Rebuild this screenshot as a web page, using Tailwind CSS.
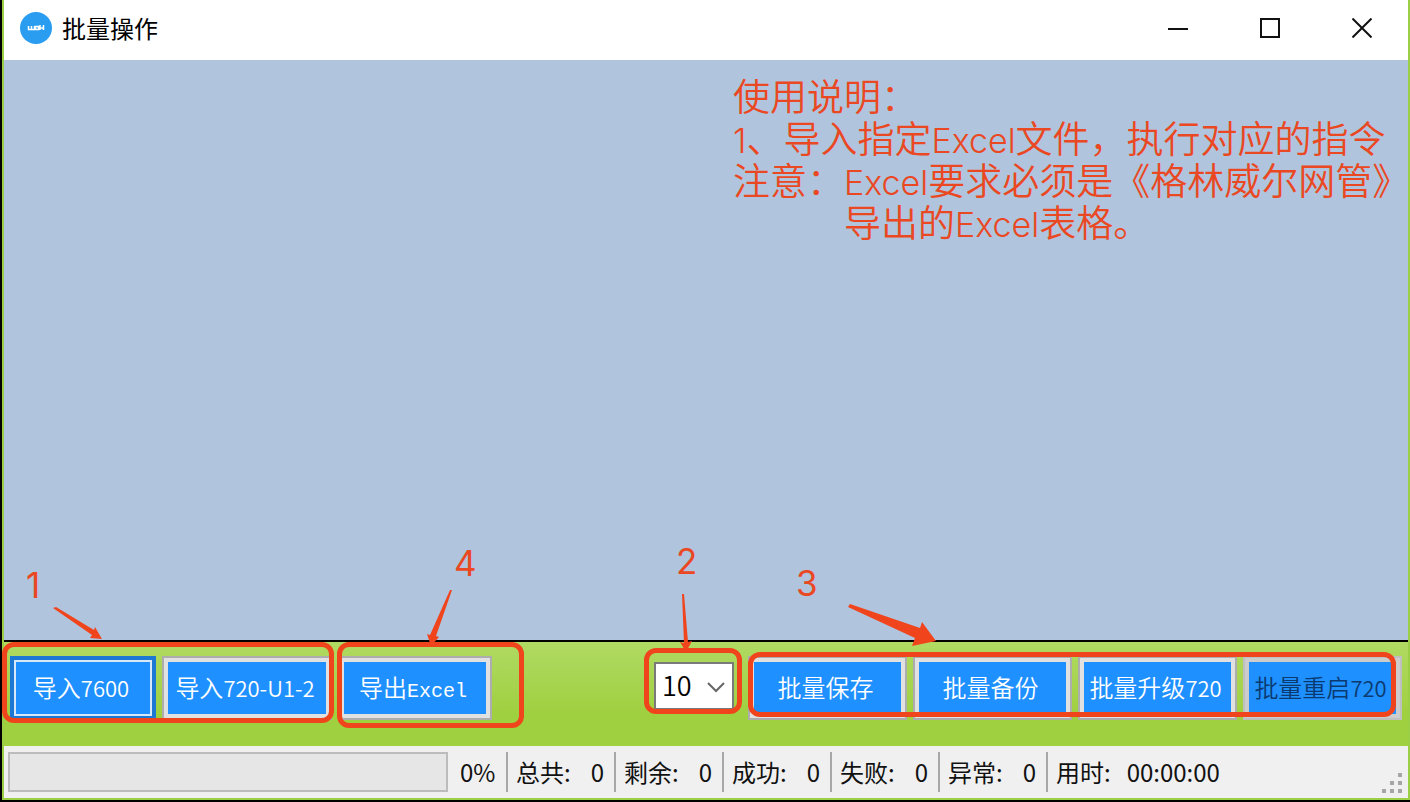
<!DOCTYPE html>
<html lang="zh-CN">
<head>
<meta charset="utf-8">
<title>批量操作</title>
<script src="https://cdn.jsdelivr.net/npm/@tailwindcss/browser@4"></script>
</head>
<body class="min-h-screen flex flex-col overflow-x-hidden border-l-2 border-b-2 border-black font-['Noto_Sans_CJK_SC',sans-serif]">
<div class="flex-1 flex flex-col border-x-2 border-b-2 border-[#9bcf45]">

  <header class="h-15 flex items-center bg-white pl-4 pb-1">
    <svg class="size-8" viewBox="0 0 32 32" aria-hidden="true">
      <circle cx="16" cy="16" r="16" fill="#2b9df0"/>
      <path d="M8.500 14v3.500h6V14M11.500 14v3.500M15.500 14.500h3v3h-3zM20 13v5M23.500 13v5M20 16h3.500" fill="none" stroke="#fff" stroke-width="1.500"/>
    </svg>
    <h1 class="ml-[10px] text-2xl text-black">批量操作</h1>
    <div class="ml-auto flex h-full">
      <button aria-label="最小化" class="w-[92px] grid place-items-center"><svg width="20" height="20" viewBox="0 0 20 20"><path d="M0 11h20" stroke="#111" stroke-width="2"/></svg></button>
      <button aria-label="最大化" class="w-[92px] grid place-items-center"><svg width="20" height="20" viewBox="0 0 20 20"><path d="M1 1h18v18H1z" fill="none" stroke="#111" stroke-width="2"/></svg></button>
      <button aria-label="关闭" class="w-[92px] grid place-items-center"><svg width="20" height="20" viewBox="0 0 20 20"><path d="M.5.5l19 19M19.500.5l-19 19" stroke="#111" stroke-width="2"/></svg></button>
    </div>
  </header>

  <main class="flex-1 flex justify-end bg-[#b0c4de]">
    <div class="w-[675px] pt-[14px] whitespace-nowrap text-[37px] leading-[42px] font-[350] text-[#ea4822]">
      <p>使用说明：</p>
      <p><span class="font-[Inter] text-[34px] leading-none">1</span>、导入指定<span class="font-[Inter] text-[34px] leading-none">Excel</span>文件，执行对应的指令</p>
      <p>注意：<span class="font-[Inter] text-[34px] leading-none">Excel</span>要求必须是《格林威尔网管》</p>
      <p class="pl-[111px]">导出的<span class="font-[Inter] text-[34px] leading-none">Excel</span>表格。</p>
    </div>
  </main>

  <section class="h-[106px] flex items-start border-t-2 border-black bg-linear-to-b from-[#b0da62] to-[#9fd03f] to-70% px-[6px] pt-[14px] text-2xl font-[350] text-white">
    <div class="relative flex gap-[6px]">
      <button class="w-[146px] h-16 border-4 border-[#1c78d2] bg-[#1e90ff]"><span class="flex h-full items-center justify-center border-2 border-[#d6e8fa] pr-1 pb-[2px]"><span>导入<span class="text-[22px] leading-none">7600</span></span></span></button>
      <button class="w-[170px] h-16 border-2 border-[#adadad] bg-[#1e90ff]"><span class="flex h-full items-center justify-center border-4 border-[#e1e1e1] pr-1 pb-[2px] whitespace-nowrap"><span>导入<span class="text-[22px] leading-none">720-U1-2</span></span></span></button>
      <div class="pointer-events-none absolute -left-2 -right-[2px] -top-[14px] -bottom-[3px] rounded-xl border-[5px] border-[#f0451c]"></div>
      <svg class="pointer-events-none absolute left-[10px] -top-[96px]" width="100" height="90" viewBox="20 560 100 90">
        <text x="26" y="598" font-family="Inter" font-size="35" font-weight="400" fill="#ea4822">1</text>
        <path d="M53 608l3-1 38 23 1-3 7 12-12-1 2-3z" fill="#f0451c"/>
      </svg>
    </div>
    <div class="relative ml-[6px]">
      <button class="w-[154px] h-16 border-2 border-[#adadad] bg-[#1e90ff]"><span class="flex h-full items-center justify-center border-4 border-[#e1e1e1] pr-1 pb-[2px]"><span>导出<span class="font-['Liberation_Mono'] text-xl leading-none">Excel</span></span></span></button>
      <div class="pointer-events-none absolute -left-px -right-8 -top-[14px] -bottom-2 rounded-xl border-[5px] border-[#f0451c]"></div>
      <svg class="pointer-events-none absolute left-[72px] -top-[116px]" width="80" height="110" viewBox="410 540 80 110">
        <text x="454" y="576" font-family="Inter" font-size="35" font-weight="400" fill="#ea4822">4</text>
        <path d="M450 590h2l-16 46 3 1-8 9-4-12 3 1z" fill="#f0451c"/>
      </svg>
    </div>

    <div class="relative ml-auto mt-[6px]">
      <select aria-label="数量" class="block w-20 h-12 appearance-none border-2 border-[#7a7a7a] bg-white pl-[6px] pb-1 text-[27px] leading-none text-black"><option>10</option></select>
      <svg class="pointer-events-none absolute right-2 top-[18px]" width="20" height="14" viewBox="0 0 20 14"><path d="M2 3l8 8 8-8" fill="none" stroke="#666" stroke-width="2"/></svg>
      <div class="pointer-events-none absolute -left-[10px] -right-2 -top-[14px] -bottom-1 rounded-xl border-[5px] border-[#f0451c]"></div>
      <svg class="pointer-events-none absolute left-[6px] -top-[122px]" width="60" height="114" viewBox="660 540 60 114">
        <text x="676" y="574" font-family="Inter" font-size="35" font-weight="400" fill="#ea4822">2</text>
        <path d="M682 594h2l4 48 4-1-6 11-6-10 4 1z" fill="#f0451c"/>
      </svg>
    </div>

    <div class="relative ml-[14px] flex gap-[6px]">
      <button class="w-[159px] h-16 border-2 border-[#adadad] bg-[#1e90ff]"><span class="flex h-full items-center justify-center border-4 border-[#e1e1e1] pr-1 pb-[2px] whitespace-nowrap">批量保存</span></button>
      <button class="w-[159px] h-16 border-2 border-[#adadad] bg-[#1e90ff]"><span class="flex h-full items-center justify-center border-4 border-[#e1e1e1] pr-1 pb-[2px] whitespace-nowrap">批量备份</span></button>
      <button class="w-[159px] h-16 border-2 border-[#adadad] bg-[#1e90ff]"><span class="flex h-full items-center justify-center border-4 border-[#e1e1e1] pr-1 pb-[2px] whitespace-nowrap"><span>批量升级<span class="text-[22px] leading-none">720</span></span></span></button>
      <button disabled class="w-[159px] h-16 border-2 border-[#bfbfbf] bg-[#1e90ff] text-[#0b3a70]"><span class="flex h-full items-center justify-center border-4 border-[#cccccc] pr-1 pb-[2px] whitespace-nowrap"><span>批量重启<span class="text-[22px] leading-none">720</span></span></span></button>
      <div class="pointer-events-none absolute left-0 right-[6px] -top-1 bottom-[3px] rounded-xl border-[5px] border-[#f0451c]"></div>
      <svg class="pointer-events-none absolute left-[42px] -top-[96px]" width="160" height="90" viewBox="790 560 160 90">
        <text x="796" y="596" font-family="Inter" font-size="35" font-weight="400" fill="#ea4822">3</text>
        <path d="M848 607l2-3 70 24 2-6 14 19-24 5 3-8z" fill="#f0451c"/>
      </svg>
    </div>
  </section>

  <footer class="h-13 flex items-center bg-[#f0f0f0] pl-1 text-2xl leading-10 text-[#111] whitespace-nowrap">
    <progress aria-label="进度" value="0" max="100" class="w-[440px] h-10 appearance-none border-2 border-[#bcbcbc] bg-[#e6e6e6] [&::-webkit-progress-bar]:bg-[#e6e6e6]"></progress>
    <span class="w-[58px] pl-3">0%</span>
    <div class="w-[108px] h-10 flex justify-between border-l-2 border-[#a8a8a8] pl-2 pr-[10px]"><span>总共:</span><span>0</span></div>
    <div class="w-[108px] h-10 flex justify-between border-l-2 border-[#a8a8a8] pl-2 pr-[10px]"><span>剩余:</span><span>0</span></div>
    <div class="w-[108px] h-10 flex justify-between border-l-2 border-[#a8a8a8] pl-2 pr-[10px]"><span>成功:</span><span>0</span></div>
    <div class="w-[108px] h-10 flex justify-between border-l-2 border-[#a8a8a8] pl-2 pr-[10px]"><span>失败:</span><span>0</span></div>
    <div class="w-[108px] h-10 flex justify-between border-l-2 border-[#a8a8a8] pl-2 pr-[10px]"><span>异常:</span><span>0</span></div>
    <div class="h-10 flex gap-4 border-l-2 border-[#a8a8a8] pl-2"><span>用时:</span><span>00:00:00</span></div>
    <svg class="ml-auto mr-[6px] mb-[5px] self-end" width="20" height="20" viewBox="0 0 20 20" fill="#a6a6a6" aria-hidden="true"><path d="M16 0h4v4h-4zM8 8h4v4H8zM16 8h4v4h-4zM0 16h4v4H0zM8 16h4v4H8zM16 16h4v4h-4z"/></svg>
  </footer>
</div>
</body>
</html>
